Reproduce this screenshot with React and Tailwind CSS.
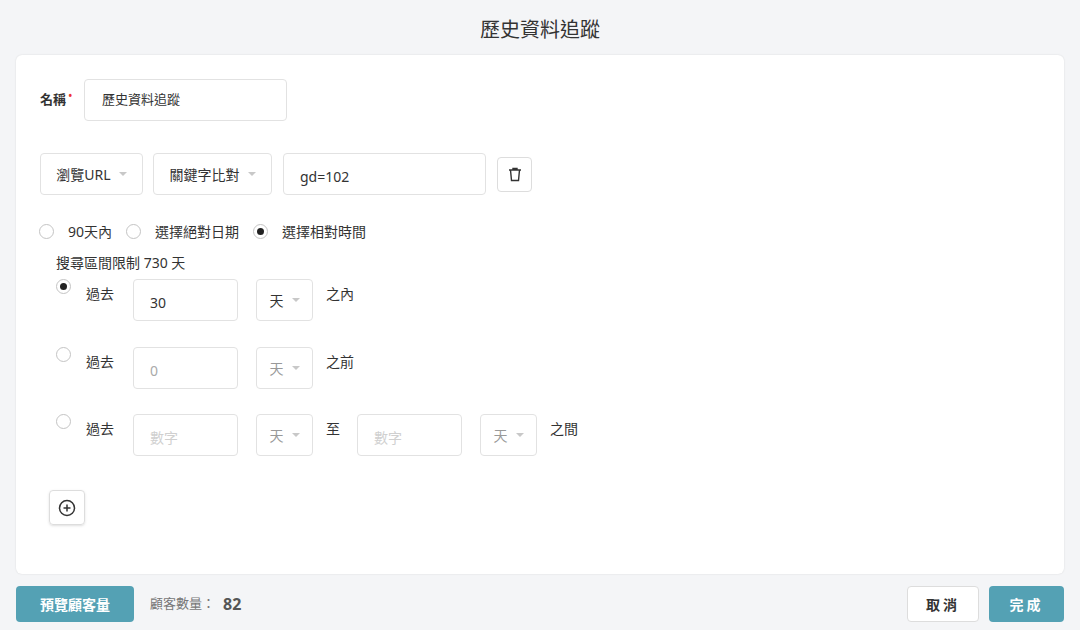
import React from "react";

const Caret = () => (
  <span className="ml-2 inline-block w-0 h-0 border-l-[4px] border-r-[4px] border-t-[4px] border-l-transparent border-r-transparent border-t-[#c8c8c8]" />
);

const Radio = ({ on }) => (
  <span className="w-[15px] h-[15px] rounded-full border border-[#c4c4c4] bg-white flex items-center justify-center shrink-0">
    {on && <span className="w-[7px] h-[7px] rounded-full bg-[#222]" />}
  </span>
);

const Sel = ({ text, w, dim }) => (
  <div className={`h-[42px] ${w} border border-[#e2e2e2] rounded flex items-center justify-center text-[14px] ${dim ? "text-[#999]" : "text-[#333]"}`}>
    {text}<Caret />
  </div>
);

const Inp = ({ text, ph, dim, w = "w-[105px]" }) => (
  <div className={`h-[42px] ${w} border border-[#e2e2e2] rounded flex items-center px-4 pt-1 text-[14px] ${ph ? "text-[#d0d0d0]" : dim ? "text-[#aaa]" : "text-[#333]"}`}>
    {text}
  </div>
);

export default function App() {
  return (
    <div className="w-[1080px] h-[630px] bg-[#f4f5f7] flex flex-col" style={{ fontFamily: '"Noto Sans", "Noto Sans CJK TC", sans-serif' }}>
      <div className="h-[55px] flex items-center justify-center text-[20px] text-[#333] pt-1">歷史資料追蹤</div>
      <div className="mx-4 h-[519px] bg-white rounded-md shadow-[0_0_2px_rgba(0,0,0,0.12)] pl-6 pt-6 text-[14px] text-[#333]">
        <div className="flex items-center">
          <span className="font-bold text-[13px]">名稱</span>
          <span className="text-[#e33] text-[12px] -mt-2 ml-[2px] w-[12px]">•</span>
          <div className="h-[42px] w-[203px] border border-[#e2e2e2] rounded flex items-center px-[17px] ml-1 text-[13px]">歷史資料追蹤</div>
        </div>
        <div className="flex items-center mt-[32px]">
          <Sel text="瀏覽URL" w="w-[103px]" />
          <div className="w-[10px]" />
          <Sel text="關鍵字比對" w="w-[119px]" />
          <div className="w-[11px]" />
          <Inp text="gd=102" w="w-[203px]" />
          <div className="ml-[11px] w-[35px] h-[35px] border border-[#ddd] rounded flex items-center justify-center">
            <svg width="14" height="15" viewBox="0 0 14 15" fill="none" stroke="#333" strokeWidth="1.4"><path d="M1 3h12M5 3V1.5h4V3M2.5 3l1 10.5h7l1-10.5" /></svg>
          </div>
        </div>
        <div className="flex items-center mt-[26px] text-[14px] -ml-[1px]">
          <Radio /><span className="ml-[14px]">90天內</span>
          <span className="ml-[14px]"><Radio /></span><span className="ml-[14px]">選擇絕對日期</span>
          <span className="ml-[14px]"><Radio on /></span><span className="ml-[14px]">選擇相對時間</span>
        </div>
        <div className="ml-4 mt-[10px]">搜尋區間限制 730 天</div>
        <div className="flex items-start mt-[6px] ml-[16px]">
          <Radio on /><span className="ml-[15px] mt-[4px] w-[47px]">過去</span>
          <Inp text="30" /><span className="w-[18px]" /><Sel text="天" w="w-[57px]" />
          <span className="ml-[13px] mt-[4px]">之內</span>
        </div>
        <div className="flex items-start mt-[26px] ml-[16px]">
          <Radio /><span className="ml-[15px] mt-[4px] w-[47px]">過去</span>
          <Inp text="0" dim /><span className="w-[18px]" /><Sel text="天" w="w-[57px]" dim />
          <span className="ml-[13px] mt-[4px]">之前</span>
        </div>
        <div className="flex items-start mt-[25px] ml-[16px]">
          <Radio /><span className="ml-[15px] mt-[4px] w-[47px]">過去</span>
          <Inp text="數字" ph /><span className="w-[18px]" /><Sel text="天" w="w-[57px]" dim />
          <span className="ml-[13px] mt-[4px] w-[31px]">至</span>
          <Inp text="數字" ph /><span className="w-[18px]" /><Sel text="天" w="w-[57px]" dim />
          <span className="ml-[13px] mt-[4px]">之間</span>
        </div>
        <div className="mt-[34px] ml-[9px] w-[36px] h-[35px] border border-[#ddd] rounded flex items-center justify-center shadow-sm">
          <svg width="18" height="18" viewBox="0 0 18 18" fill="none" stroke="#333" strokeWidth="1.5"><circle cx="9" cy="9" r="7.5" /><path d="M9 5.5v7M5.5 9h7" /></svg>
        </div>
      </div>
      <div className="flex items-center mx-4 mt-[12px]">
        <div className="w-[118px] h-[36px] bg-[#54a1b4] rounded text-white font-bold text-[14px] flex items-center justify-center">預覽顧客量</div>
        <span className="ml-4 text-[13px] text-[#777]">顧客數量：</span>
        <span className="ml-2 text-[16px] font-bold text-[#555]">82</span>
        <div className="flex-1" />
        <div className="w-[72px] h-[36px] bg-white border border-[#ddd] rounded text-[14px] font-bold text-[#333] flex items-center justify-center tracking-[3px]">取消</div>
        <div className="ml-[10px] w-[75px] h-[36px] bg-[#54a1b4] rounded text-white text-[14px] font-bold flex items-center justify-center tracking-[3px]">完成</div>
      </div>
    </div>
  );
}
